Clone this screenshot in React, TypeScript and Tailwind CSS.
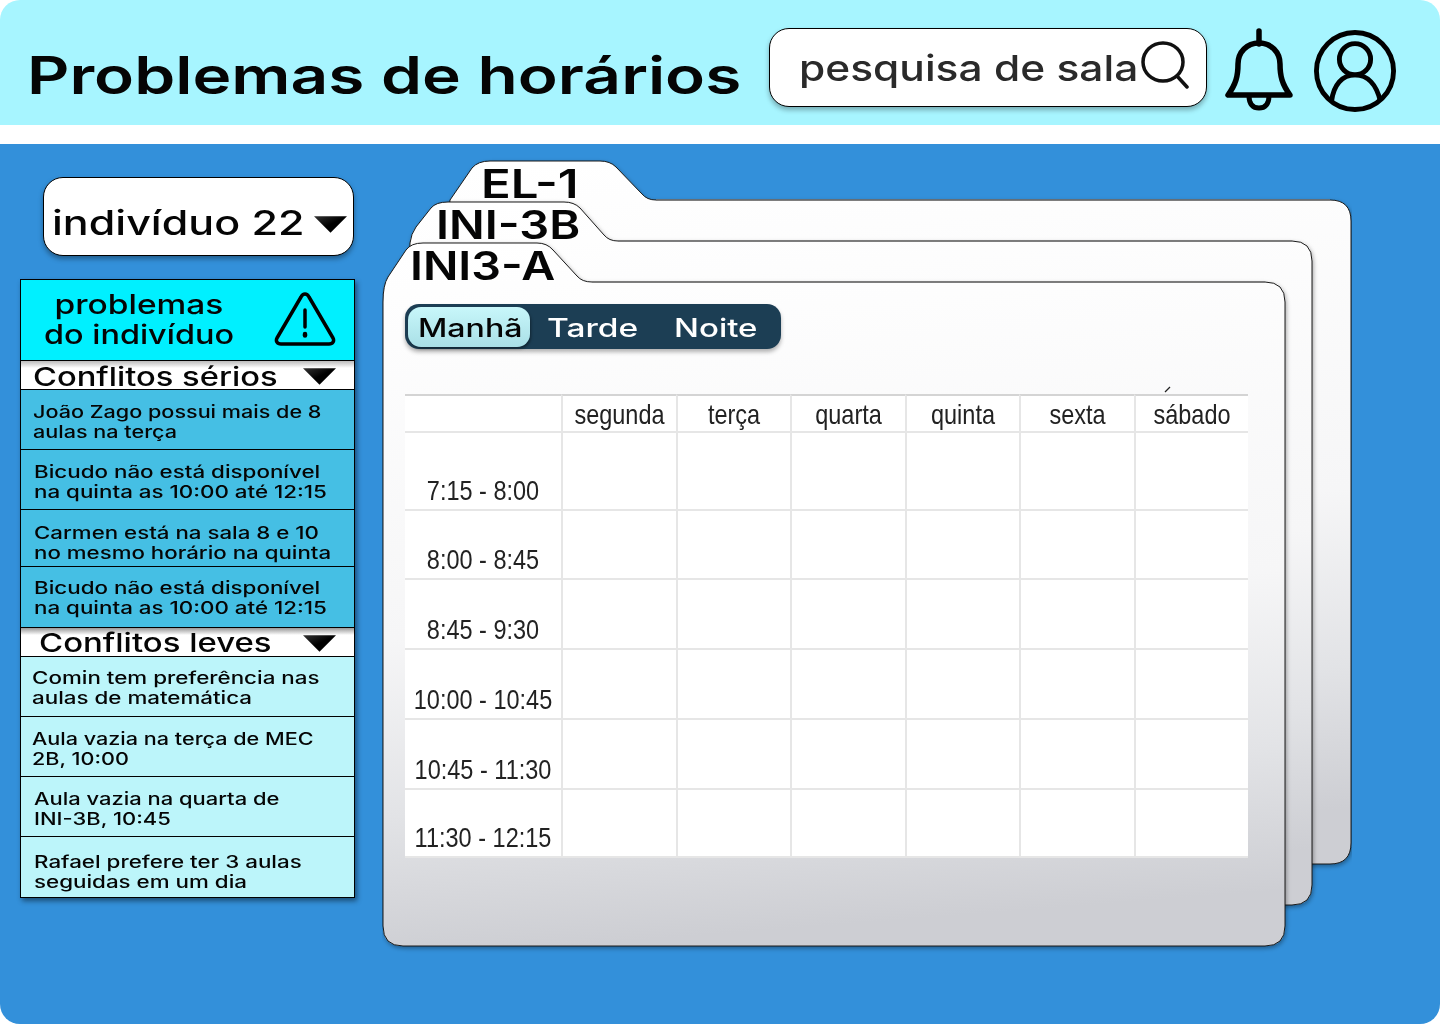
import React from "react";

const Caret = ({ w = 32, h = 16 }: { w?: number; h?: number }) => (
  <svg width={w} height={h} viewBox="0 0 32 16" className="shrink-0">
    <defs>
      <linearGradient id="car" x1="0" y1="0" x2="1" y2="1">
        <stop offset="0" stopColor="#333" />
        <stop offset="0.5" stopColor="#000" />
      </linearGradient>
    </defs>
    <path d="M0 0H32L16 16Z" fill="url(#car)" />
  </svg>
);

const Item = ({ lines, bg, pad, h, pt, sc }: { lines: string[]; bg: string; pad: string; h: string; pt: string; sc: string }) => (
  <div className={`${bg} ${pad} ${h} ${pt} border-t border-black flex flex-col justify-center`}>
    {lines.map((l) => (
      <span key={l} className={`${sc} block h-[20px] leading-[20px] text-[17px] font-medium text-[#050505] whitespace-nowrap origin-left`}>
        {l}
      </span>
    ))}
  </div>
);

const days = ["segunda", "terça", "quarta", "quinta", "sexta", "sábado"];
const times: [string, string][] = [
  ["7:15 - 8:00", "h-[78px]"],
  ["8:00 - 8:45", "h-[69px]"],
  ["8:45 - 9:30", "h-[70px]"],
  ["10:00 - 10:45", "h-[70px]"],
  ["10:45 - 11:30", "h-[70px]"],
  ["11:30 - 12:15", "h-[68px]"],
];

const Folders = () => (
  <svg className="absolute inset-0" width="970" height="880" viewBox="382 144 970 880">
    <defs>
      <linearGradient id="fold" x1="0.1" y1="0" x2="0.2" y2="1">
        <stop offset="0" stopColor="#ffffff" />
        <stop offset="0.55" stopColor="#f6f6f7" />
        <stop offset="0.8" stopColor="#e2e3e6" />
        <stop offset="1" stopColor="#cdced3" />
      </linearGradient>
      <filter id="sh" x="-5%" y="-5%" width="110%" height="110%">
        <feDropShadow dx="1" dy="2" stdDeviation="2" floodColor="#000" floodOpacity="0.35" />
      </filter>
    </defs>
    <path filter="url(#sh)" fill="url(#fold)" stroke="#1a1a1a" strokeWidth="1" d="M440 300 L450 200 L472 168 Q478 161 490 161 L600 161 Q610 161 616 167 L642 194 Q647 200 656 200 L1330 200 Q1351 200 1351 221 L1351 843 Q1351 864 1330 864 L440 864 Z" />
    <path filter="url(#sh)" fill="url(#fold)" stroke="#1a1a1a" strokeWidth="1" d="M405 400 L410 243 Q411 234 416 227 L431 208 Q436 202 448 202 L564 202 Q574 202 580 208 L604 235 Q609 241 618 241 L1292 241 Q1312 241 1312 261 L1312 885 Q1312 905 1292 905 L405 905 Z" />
    <path filter="url(#sh)" fill="url(#fold)" stroke="#1a1a1a" strokeWidth="1" d="M383 302 Q383 285 388 277 L406 250 Q411 243 423 243 L537 243 Q547 243 553 250 L577 276 Q582 282 592 282 L1265 282 Q1285 282 1285 302 L1285 926 Q1285 946 1265 946 L403 946 Q383 946 383 926 Z" />
    <path d="M592 282 H1265 M618 241 H1292 M656 200 H1330" stroke="#7a7a7a" strokeWidth="1.5" fill="none" />
  </svg>
);

export default function App() {
  return (
    <div className="w-[1440px] h-[1024px] bg-white flex flex-col overflow-hidden font-['Inter',sans-serif]">
      <header className="h-[125px] shrink-0 bg-[#a7f5ff] rounded-t-[20px] flex items-center pl-[27px]">
        <h1 className="w-[741px] shrink-0 mt-[27px] text-[52px] leading-none font-semibold text-[#050505] whitespace-nowrap origin-left scale-x-[1.265]">Problemas de horários</h1>
        <div className="ml-[1px] mt-[9px] w-[438px] h-[79px] bg-white border border-black rounded-[20px] shadow-[0_3px_5px_rgba(0,0,0,0.3)] flex items-center pl-[29px] relative">
          <span className="text-[36px] leading-none font-medium text-[#2a2a2a] whitespace-nowrap origin-left scale-x-[1.18] mt-[2px]">pesquisa de sala</span>
          <svg className="absolute left-[371px] top-[12px]" width="48" height="48" viewBox="0 0 48 48" fill="none" stroke="#111" strokeLinecap="round">
            <ellipse cx="22" cy="21" rx="20" ry="19" strokeWidth="3.5" />
            <path d="M36 35L46 46" strokeWidth="3.5" />
          </svg>
        </div>
        <svg className="ml-[17px] mt-[14px] shrink-0" width="70" height="83" viewBox="0 0 70 83" fill="none" stroke="#000" strokeLinecap="round" strokeLinejoin="round">
          <path d="M35 3V16" strokeWidth="5.5" />
          <path d="M4 67H66C58 56 56 48 56 36C56 24 47 15 35 15C23 15 14 24 14 36C14 48 12 56 4 67Z" strokeWidth="5.5" />
          <path d="M25 68C25 76 29 80 35 80C41 80 45 76 45 68" strokeWidth="5" />
        </svg>
        <svg className="ml-[20px] mt-[17px] shrink-0" width="82" height="82" viewBox="0 0 84 84" fill="none" stroke="#000" strokeWidth="5">
          <circle cx="42" cy="42" r="39.5" />
          <ellipse cx="42" cy="30" rx="16" ry="16" />
          <path d="M18 73C20 56 29 46 42 46C55 46 64 56 68 73" />
        </svg>
      </header>

      <main className="mt-[19px] h-[880px] bg-[#3390da] rounded-b-[20px] flex">
        <aside className="w-[361px] shrink-0 pl-[20px] pt-[33px]">
          <div className="ml-[23px] w-[311px] h-[79px] bg-white border border-black rounded-[20px] shadow-[0_3px_5px_rgba(0,0,0,0.35)] flex items-center pl-[8px] relative">
            <span className="text-[34px] leading-none font-medium text-[#050505] whitespace-nowrap origin-left scale-x-[1.265] mt-[13px]">indivíduo 22</span>
            <div className="absolute left-[270px] top-[38px]"><Caret w={33} h={17} /></div>
          </div>
          <div className="mt-[23px] w-[335px] border border-black shadow-[2px_3px_5px_rgba(0,0,0,0.45)]">
            <div className="h-[80px] bg-[#00f0ff] flex items-center relative">
              <div className="w-[236px] text-center">
                <div className="text-[27px] leading-[30px] font-medium text-[#050505] scale-x-[1.24]">problemas</div>
                <div className="text-[27px] leading-[30px] font-medium text-[#050505] scale-x-[1.2]">do indivíduo</div>
              </div>
              <svg className="absolute left-[253px] top-[11px]" width="62" height="56" viewBox="0 0 62 56" fill="none" stroke="#000" strokeWidth="3.5" strokeLinecap="round" strokeLinejoin="round">
                <path d="M31 3C33 3 34 4 35 6L59 47C60.500 50 59 53 55 53H7C3 53 1.500 50 3 47L27 6C28 4 29 3 31 3Z" />
                <path d="M31 19V36" />
                <path d="M31 43V44.500" strokeWidth="4.500" />
              </svg>
            </div>
            <div className="h-[29px] bg-white border-t border-black flex items-center pl-[12px] relative bg-gradient-to-b from-[#bbb] from-0% to-white to-25%">
              <span className="text-[26px] leading-none font-medium text-[#050505] whitespace-nowrap origin-left scale-x-[1.257] mt-[3px]">Conflitos sérios</span>
              <div className="absolute left-[282px] top-[7px]"><Caret w={33} h={17} /></div>
            </div>
            <Item sc="scale-x-[1.27]" bg="bg-[#45bfe4]" pad="pl-[12px]" h="h-[60px]" pt="pt-[5px]" lines={["João Zago possui mais de 8", "aulas na terça"]} />
            <Item sc="scale-x-[1.315]" bg="bg-[#45bfe4]" pad="pl-[13px]" h="h-[60px]" pt="pt-[5px]" lines={["Bicudo não está disponível", "na quinta as 10:00 até 12:15"]} />
            <Item sc="scale-x-[1.31]" bg="bg-[#45bfe4]" pad="pl-[13px]" h="h-[57px]" pt="pt-[10px]" lines={["Carmen está na sala 8 e 10", "no mesmo horário na quinta"]} />
            <Item sc="scale-x-[1.315]" bg="bg-[#45bfe4]" pad="pl-[13px]" h="h-[61px]" pt="pt-[2px]" lines={["Bicudo não está disponível", "na quinta as 10:00 até 12:15"]} />
            <div className="h-[29px] bg-white border-t border-black flex items-center pl-[18px] relative bg-gradient-to-b from-[#999] from-0% to-white to-25%">
              <span className="text-[26px] leading-none font-medium text-[#050505] whitespace-nowrap origin-left scale-x-[1.266] mt-[2px]">Conflitos leves</span>
              <div className="absolute left-[282px] top-[7px]"><Caret w={33} h={17} /></div>
            </div>
            <Item sc="scale-x-[1.315]" bg="bg-[#bcf5fa]" pad="pl-[11px]" h="h-[60px]" pt="pt-[3px]" lines={["Comin tem preferência nas", "aulas de matemática"]} />
            <Item sc="scale-x-[1.27]" bg="bg-[#bcf5fa]" pad="pl-[11px]" h="h-[60px]" pt="pt-[5px]" lines={["Aula vazia na terça de MEC", "2B, 10:00"]} />
            <Item sc="scale-x-[1.29]" bg="bg-[#bcf5fa]" pad="pl-[13px]" h="h-[60px]" pt="pt-[5px]" lines={["Aula vazia na quarta de", "INI-3B, 10:45"]} />
            <Item sc="scale-x-[1.315]" bg="bg-[#bcf5fa]" pad="pl-[13px]" h="h-[61px]" pt="pt-[9px]" lines={["Rafael prefere ter 3 aulas", "seguidas em um dia"]} />
          </div>
        </aside>

        <section className="relative w-[970px] ml-[21px] h-full pl-[23px] pt-[160px]">
          <Folders />
          <span className="absolute left-[99px] top-[22px] h-[36px] text-[39px] leading-[36px] font-semibold text-[#050505] whitespace-nowrap origin-left scale-x-[1.26]">EL-1</span>
          <span className="absolute left-[54px] top-[63px] h-[36px] text-[39px] leading-[36px] font-semibold text-[#050505] whitespace-nowrap origin-left scale-x-[1.206]">INI-3B</span>
          <span className="absolute left-[28px] top-[104px] h-[36px] text-[39px] leading-[36px] font-semibold text-[#050505] whitespace-nowrap origin-left scale-x-[1.197]">INI3-A</span>

          <div className="relative w-[376px] h-[45px] bg-[#1c3e54] rounded-[14px] shadow-[0_3px_4px_rgba(0,0,0,0.3)] flex items-center pl-[3px]">
            <div className="w-[122px] h-[40px] rounded-[13px] bg-gradient-to-b from-[#c8f7fa] to-[#a9dfe6] shadow-[1px_2px_3px_rgba(0,0,0,0.4)] flex items-center pl-[10px]">
              <span className="text-[25px] leading-none font-medium text-[#050505] whitespace-nowrap origin-left scale-x-[1.285] mt-[4px]">Manhã</span>
            </div>
            <span className="ml-[17px] w-[127px] text-[25px] leading-none font-medium text-white whitespace-nowrap origin-left scale-x-[1.34] mt-[4px]">Tarde</span>
            <span className="text-[25px] leading-none font-medium text-white whitespace-nowrap origin-left scale-x-[1.32] mt-[4px]">Noite</span>
          </div>

          <div className="relative mt-[45px] w-[843px] bg-white border-b-2 border-b-[#e6e6e6] font-['Liberation_Sans',sans-serif] text-[#222] grid grid-cols-[156px_115px_114px_115px_114px_115px_114px]">
            <svg className="absolute left-[758px] top-[-9px]" width="10" height="10" viewBox="0 0 10 10" fill="none" stroke="#222" strokeWidth="1.300"><path d="M2 7L7 2" /></svg>
            <div className="h-[37px] border-t-2 border-[#d4d4d4]" />
            {days.map((d) => (
              <div key={d} className="h-[37px] border-t-2 border-t-[#d4d4d4] border-l-2 border-l-[#e6e6e6] flex items-center justify-center">
                <span className="text-[23.500px] leading-none scale-y-[1.16] mt-[5px]">{d}</span>
              </div>
            ))}
            {times.map(([t, h]) => (
              <React.Fragment key={t}>
                <div className={`${h} border-t-2 border-[#e6e6e6] flex items-end justify-center pb-[6px]`}>
                  <span className="text-[23.500px] leading-none scale-y-[1.16]">{t}</span>
                </div>
                {days.map((d) => (
                  <div key={d} className={`${h} border-t-2 border-t-[#e6e6e6] border-l-2 border-l-[#e6e6e6]`} />
                ))}
              </React.Fragment>
            ))}
          </div>
        </section>
      </main>
    </div>
  );
}
